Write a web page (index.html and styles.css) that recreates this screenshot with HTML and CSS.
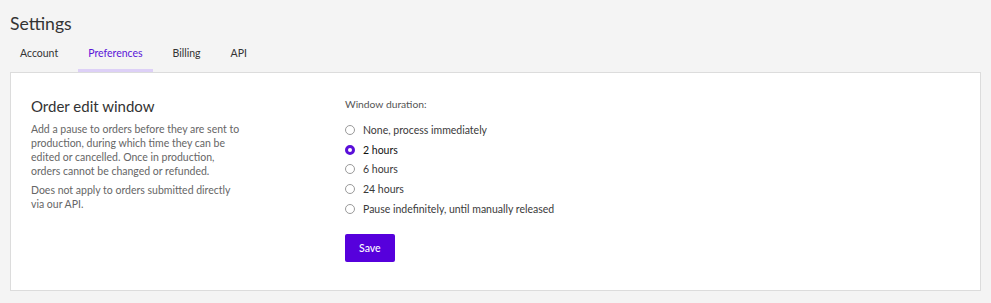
FILE: index.html
```html
<!DOCTYPE html>
<html lang="en">
<head>
<meta charset="utf-8">
<title>Settings</title>
<link rel="stylesheet" href="styles.css">
</head>
<body>
<h1 class="page-title">Settings</h1>
<nav class="tabs">
  <a class="tab">Account</a>
  <a class="tab tab-active">Preferences</a>
  <a class="tab">Billing</a>
  <a class="tab">API</a>
</nav>
<section class="card">
  <div class="card-left">
    <h2 class="section-title">Order edit window</h2>
    <p class="desc">Add a pause to orders before they are sent to production, during which time they can be edited or cancelled. Once in production, orders cannot be changed or refunded.</p>
    <p class="desc">Does not apply to orders submitted directly via our API.</p>
  </div>
  <div class="card-right">
    <div class="field-label">Window duration:</div>
    <ul class="radio-list">
      <li class="radio-row"><span class="radio"></span><span class="radio-label">None, process immediately</span></li>
      <li class="radio-row"><span class="radio radio-checked"></span><span class="radio-label radio-label-checked">2 hours</span></li>
      <li class="radio-row"><span class="radio"></span><span class="radio-label">6 hours</span></li>
      <li class="radio-row"><span class="radio"></span><span class="radio-label">24 hours</span></li>
      <li class="radio-row"><span class="radio"></span><span class="radio-label">Pause indefinitely, until manually released</span></li>
    </ul>
    <button class="btn-save">Save</button>
  </div>
</section>
</body>
</html>
```
FILE: styles.css
```css
* { box-sizing: border-box; }
html, body { margin: 0; }
body {
  background: #f4f4f4;
  font-family: Lato, "Noto Sans", sans-serif;
  color: #333;
  padding: 14px 10px 0 10px;
}
.page-title {
  margin: 0 0 5px 0;
  font-size: 17.6px;
  line-height: 20px;
  font-weight: 400;
  color: #333;
}
.tabs {
  display: flex;
  gap: 10px;
}
.tab {
  display: block;
  padding: 8px 10px 10px;
  font-size: 10.5px;
  line-height: 12px;
  color: #333;
  border-bottom: 3px solid transparent;
}
.tab-active {
  color: #5a14d8;
  border-bottom-color: #ddd0f7;
}
.card {
  width: 971px;
  height: 219px;
  background: #fff;
  border: 1px solid #dcdcdc;
  padding: 24px 20px 0 20px;
  display: flex;
}
.card-left {
  width: 314px;
}
.section-title {
  margin: 0 0 7px 0;
  font-size: 15px;
  line-height: 18px;
  font-weight: 400;
  color: #333;
}
.desc {
  margin: 0 0 5px 0;
  width: 212px;
  font-size: 10.5px;
  line-height: 14px;
  color: #666;
}
.card-right {
  display: flex;
  flex-direction: column;
  align-items: flex-start;
}
.field-label {
  font-size: 10.3px;
  line-height: 14px;
  color: #555;
  margin-bottom: 9px;
}
.radio-list {
  list-style: none;
  margin: 0 0 15px 0;
  padding: 0;
}
.radio-row {
  display: flex;
  align-items: center;
  height: 19.8px;
}
.radio {
  width: 10px;
  height: 10px;
  border: 1px solid #9a9a9a;
  border-radius: 50%;
  margin-right: 8px;
  flex: none;
}
.radio-checked {
  border: 3px solid #5a0fd9;
  background: #fff;
}
.radio-label {
  font-size: 10.5px;
  line-height: 14px;
  color: #3a3a3a;
}
.radio-label-checked {
  color: #111;
}
.btn-save {
  height: 28px;
  padding: 0 14px;
  border: 0;
  border-radius: 2px;
  background: #5600dc;
  color: #fff;
  font-family: Lato, "Noto Sans", sans-serif;
  font-size: 10.5px;
  font-weight: 500;
}
```
